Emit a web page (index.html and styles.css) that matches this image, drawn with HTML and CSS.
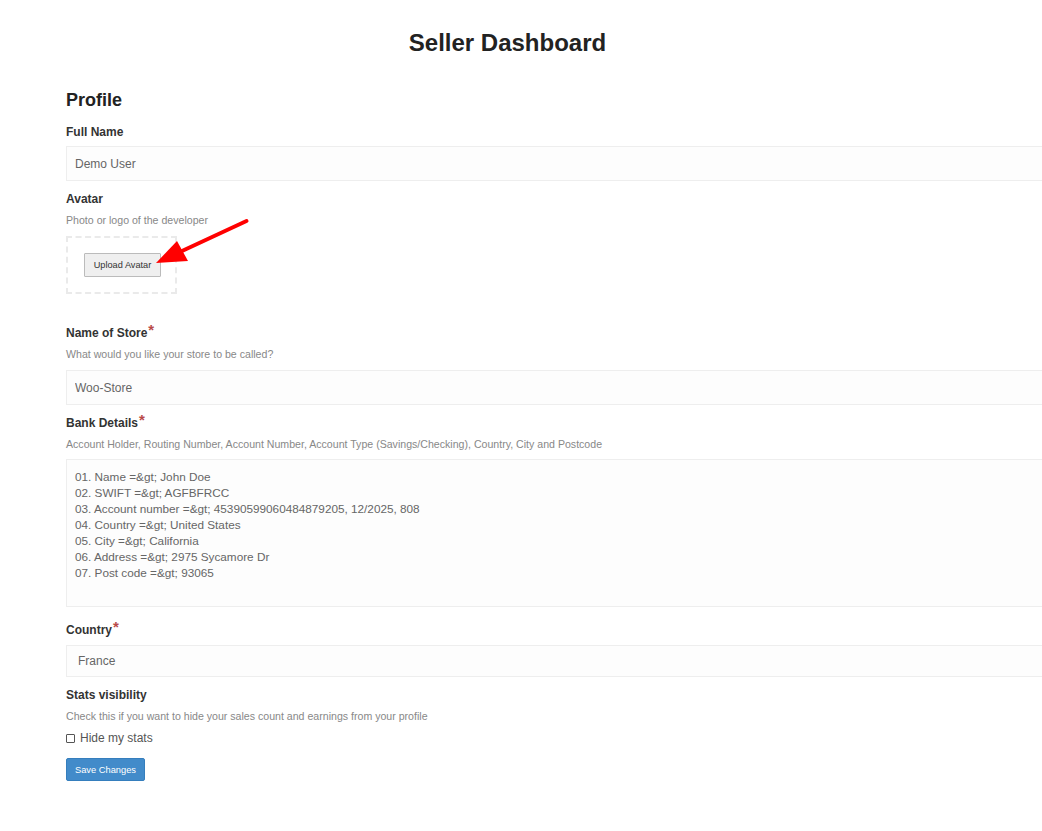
FILE: index.html
```html
<!DOCTYPE html>
<html lang="en">
<head>
    <meta charset="UTF-8">
    <meta name="viewport" content="width=device-width, initial-scale=1.0">
    <title>Seller Dashboard</title>
    <link rel="stylesheet" href="styles.css">
</head>
<body>
    <div class="page">
        <h1 class="title">Seller Dashboard</h1>
        <h2 class="section">Profile</h2>

        <form id="profileForm">
            <label class="lbl lbl-first" for="fullName">Full Name</label>
            <input class="control" type="text" id="fullName" value="Demo User">

            <label class="lbl">Avatar</label>
            <p class="help">Photo or logo of the developer</p>
            <div class="avatar-box">
                <button type="button" class="btn-upload">Upload Avatar</button>
            </div>
            <svg class="arrow" width="100" height="55" viewBox="0 0 100 55">
                <line x1="96.5" y1="6" x2="32" y2="36" stroke="#f00" stroke-width="4" stroke-linecap="round"/>
                <polygon points="6,48 27,26 38,46" fill="#f00"/>
            </svg>

            <label class="lbl lbl-store" for="storeName">Name of Store<span class="req">*</span></label>
            <p class="help">What would you like your store to be called?</p>
            <input class="control control-gap" type="text" id="storeName" value="Woo-Store">

            <label class="lbl lbl-bank" for="bank">Bank Details<span class="req">*</span></label>
            <p class="help">Account Holder, Routing Number, Account Number, Account Type (Savings/Checking), Country, City and Postcode</p>
            <textarea class="control area" id="bank">01. Name =&amp;gt; John Doe
02. SWIFT =&amp;gt; AGFBFRCC
03. Account number =&amp;gt; 45390599060484879205, 12/2025, 808
04. Country =&amp;gt; United States
05. City =&amp;gt; California
06. Address =&amp;gt; 2975 Sycamore Dr
07. Post code =&amp;gt; 93065</textarea>

            <label class="lbl lbl-country" for="country">Country<span class="req">*</span></label>
            <select class="control sel" id="country">
                <option>France</option>
                <option>Germany</option>
                <option>United States</option>
            </select>

            <label class="lbl">Stats visibility</label>
            <p class="help">Check this if you want to hide your sales count and earnings from your profile</p>
            <label class="check-row"><input type="checkbox" class="check"> Hide my stats</label>

            <button type="submit" class="btn-save">Save Changes</button>
        </form>
    </div>
</body>
</html>
```

FILE: styles.css
```css
html, body { overflow-x: hidden; }
body { margin: 0; font-family: "Liberation Sans", Arial, sans-serif; color: #333; background: #fff; }
.page { position: relative; padding: 29px 0 40px 66px; }
.title { width: 883px; margin: 0; text-align: center; font-size: 24px; line-height: 28px; color: #222; }
.section { margin: 32px 0 0; font-size: 18px; line-height: 22px; color: #222; }

.lbl { display: block; margin-top: 10px; font-size: 12px; line-height: 16px; font-weight: bold; color: #333; }
.lbl-first { margin-top: 13px; }
.lbl-store { margin-top: 31px; }
.lbl-bank { margin-top: 10px; }
.lbl-country { margin-top: 15px; }
.req { color: #b94a48; font-size: 15px; margin-left: 1px; vertical-align: 2px; line-height: 10px; }

.help { margin: 7px 0 0; font-size: 10.6px; line-height: 13px; color: #888; }

.control { display: block; box-sizing: border-box; width: 1000px; height: 35px; margin-top: 6px; padding: 0 8px;
    border: 1px solid #eee; background: #fdfdfd; font-family: inherit; font-size: 12px; color: #666; outline: none; }
.control-gap { margin-top: 9px; }
.area { height: 148px; margin-top: 8px; padding: 9px 8px; font-size: 11.75px; line-height: 16px; resize: none; }
.sel { height: 32px; margin-top: 7px; padding-left: 11px; appearance: none; -webkit-appearance: none; border-radius: 0; }

.avatar-box { box-sizing: border-box; width: 111px; height: 58px; margin-top: 9px; padding: 15px 0 0 16px; border: 2px dashed #eaeaea; }
.btn-upload { box-sizing: border-box; width: 77px; height: 24px; padding: 0; border: 1px solid #bbb; border-radius: 1px;
    background: #efefef; font-family: inherit; font-size: 9.2px; color: #333; }
.arrow { position: absolute; left: 150px; top: 215px; pointer-events: none; }

.check-row { display: flex; align-items: center; margin-top: 7px; font-size: 12px; line-height: 16px; color: #555; }
.check { appearance: none; -webkit-appearance: none; box-sizing: border-box; width: 9px; height: 9px; margin: 0 5px 0 0;
    border: 1px solid #555; border-radius: 1px; background: #fff; }

.btn-save { display: block; box-sizing: border-box; width: 79px; height: 23px; margin-top: 12px; padding: 0;
    border: 1px solid #357ebd; border-radius: 2px; background: #428bca; color: #fff; font-family: inherit; font-size: 9.3px; }
```
